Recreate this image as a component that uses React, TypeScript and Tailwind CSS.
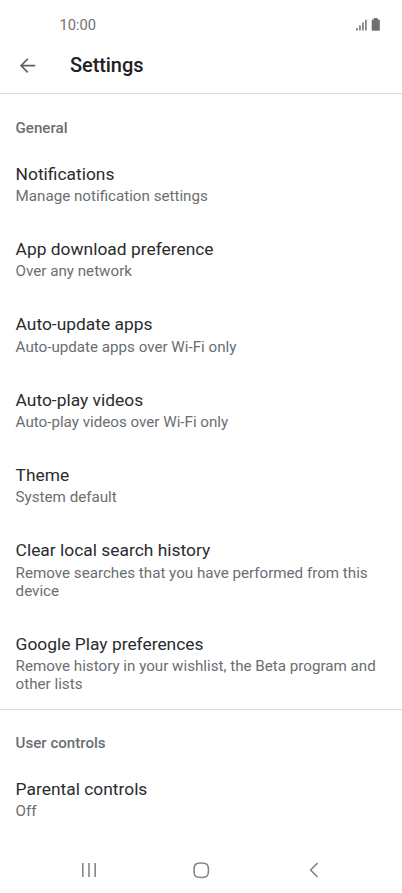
import React from "react";

interface SettingItem {
  title: string;
  detail: string;
}

const generalItems: SettingItem[] = [
  { title: "Notifications", detail: "Manage notification settings" },
  { title: "App download preference", detail: "Over any network" },
  { title: "Auto-update apps", detail: "Auto-update apps over Wi-Fi only" },
  { title: "Auto-play videos", detail: "Auto-play videos over Wi-Fi only" },
  { title: "Theme", detail: "System default" },
  { title: "Clear local search history", detail: "Remove searches that you have performed from this device" },
  { title: "Google Play preferences", detail: "Remove history in your wishlist, the Beta program and other lists" },
];

const userItems: SettingItem[] = [{ title: "Parental controls", detail: "Off" }];

function StatusBar() {
  return (
    <div className="flex h-[38px] items-end justify-between pl-[59.5px] pr-[22px] pb-1 text-[#707070]">
      <span className="text-[14.7px] leading-[18px]">10:00</span>
      <div className="flex items-end gap-1 pb-[3px]">
        <svg width="11" height="12" viewBox="0 0 11 12" fill="currentColor">
          <rect x="0.2" y="9" width="1.5" height="2.5" />
          <rect x="3.2" y="6.3" width="1.5" height="5.2" />
          <rect x="6.2" y="3.5" width="1.5" height="8" />
          <rect x="9.2" y="0.8" width="1.5" height="10.7" />
        </svg>
        <svg width="9" height="13" viewBox="0 0 9 13" fill="currentColor">
          <path d="M2.8 0h3.8v1.5H8q.8 0 .8.8V12q0 .8-.8.8H1.5q-.8 0-.8-.8V2.3q0-.8.8-.8h1.3z" />
        </svg>
      </div>
    </div>
  );
}

function Section({ heading, items }: { heading: string; items: SettingItem[] }) {
  return (
    <section className="pl-[15.6px] pr-4 pt-[23.6px]">
      <h2 className="text-[15.1px] font-medium leading-5 text-[#6a6e72]">{heading}</h2>
      <div className="mt-[24px] flex flex-col gap-[32.2px]">
        {items.map((item) => (
          <div key={item.title}>
            <div className="text-[17.4px] leading-6 text-[#2a2b2e]">{item.title}</div>
            <div className="mt-[1.2px] text-[15.17px] leading-[18px] text-[#6a6e72]">{item.detail}</div>
          </div>
        ))}
      </div>
    </section>
  );
}

export default function App() {
  return (
    <div className="flex h-[893px] w-full flex-col overflow-hidden bg-white font-['Roboto',sans-serif]">
      <StatusBar />
      <header className="flex h-14 shrink-0 items-center gap-[34px] border-b border-[#dadce0] pl-5">
        <svg width="16" height="16" viewBox="0 0 16 16" fill="none" stroke="#5f6368" strokeWidth="1.7">
          <path d="M15.2 7.6H1.2M7.8 0.8L1 7.6L7.8 14.4" />
        </svg>
        <h1 className="pb-px text-[20px] font-medium tracking-[-0.08px] text-[#202124]">Settings</h1>
      </header>
      <main className="flex-1">
        <Section heading="General" items={generalItems} />
        <div className="mt-[15.6px] border-t border-[#dadce0]" />
        <Section heading="User controls" items={userItems} />
      </main>
      <nav className="flex h-[46px] shrink-0 items-center pl-[81px] text-[#858585]">
        <svg width="16" height="16" viewBox="0 0 16 16" stroke="currentColor" strokeWidth="1.6">
          <path d="M1.8 1v14M8 1v14M14.2 1v14" />
        </svg>
        <svg className="ml-24" width="17" height="17" viewBox="0 0 17 17" fill="none" stroke="currentColor" strokeWidth="1.6">
          <path d="M8.2 1C14 1 15.5 2.5 15.5 8.2S14 15.5 8.2 15.5 1 14 1 8.2 2.5 1 8.2 1Z" />
        </svg>
        <svg className="ml-[99px]" width="10" height="16" viewBox="0 0 10 16" fill="none" stroke="currentColor" strokeWidth="1.6">
          <path d="M8.6 1L1.6 8l7 7" />
        </svg>
      </nav>
    </div>
  );
}
